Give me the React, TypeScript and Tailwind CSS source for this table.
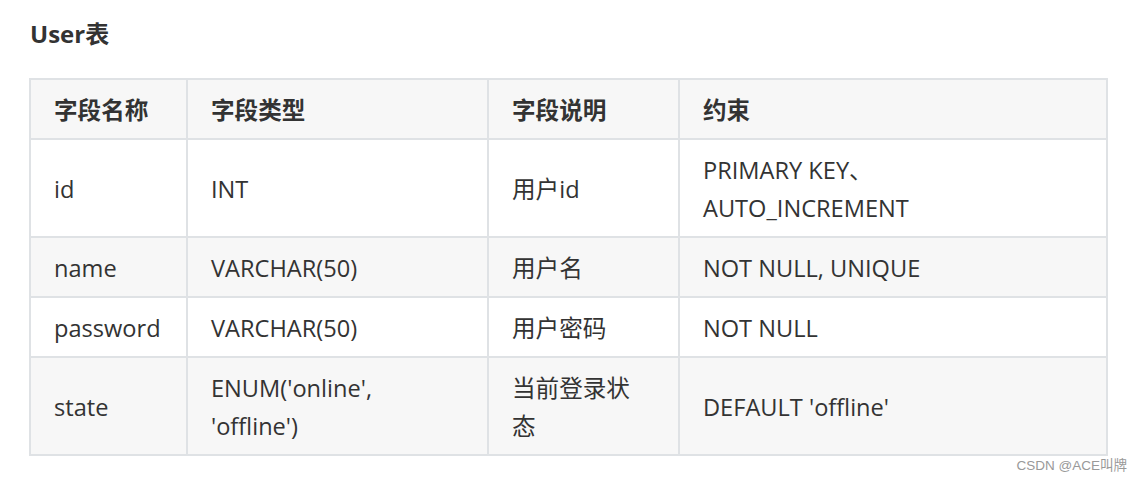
import React from "react";

const font = { fontFamily: '"Open Sans", "Noto Sans CJK SC", sans-serif' };

// Rows of the User table
const rows: string[][] = [
  ["id", "INT", "用户id", "PRIMARY KEY、\nAUTO_INCREMENT"],
  ["name", "VARCHAR(50)", "用户名", "NOT NULL, UNIQUE"],
  ["password", "VARCHAR(50)", "用户密码", "NOT NULL"],
  ["state", "ENUM('online',\n'offline')", "当前登录状\n态", "DEFAULT 'offline'"],
];

const headers = ["字段名称", "字段类型", "字段说明", "约束"];

const Cell: React.FC<{ text: string; head?: boolean }> = ({ text, head }) => (
  <td
    className={`border-2 border-[#dfe2e5] pl-[23px] pr-[20px] pt-[11px] pb-[9px] align-middle whitespace-pre-line leading-[38px] ${
      head ? "font-bold" : ""
    }`}
  >
    {text}
  </td>
);

export default function App() {
  return (
    <div className="w-[1142px] h-[483px] bg-white text-[#333] relative" style={font}>
      <div className="pl-[29px] pt-[17px]">
        <h2 className="pl-[1px] text-[24px] font-bold leading-[34px] text-[#333]">User表</h2>
        <table className="mt-[27px] table-fixed border-collapse w-[1077px] text-[23.6px]">
          <colgroup>
            <col className="w-[157px]" />
            <col className="w-[301px]" />
            <col className="w-[191px]" />
            <col className="w-[428px]" />
          </colgroup>
          <thead>
            <tr className="bg-[#f7f7f7]">
              {headers.map((h) => (
                <Cell key={h} text={h} head />
              ))}
            </tr>
          </thead>
          <tbody>
            {rows.map((r, i) => (
              <tr key={i} className={i % 2 === 1 ? "bg-[#f7f7f7]" : "bg-white"}>
                {r.map((c, j) => (
                  <Cell key={j} text={c} />
                ))}
              </tr>
            ))}
          </tbody>
        </table>
      </div>
      <div
        className="absolute right-[15px] bottom-[7px] text-[13.5px] text-[#999]"
        style={{ fontFamily: '"Liberation Sans", "Noto Sans CJK SC", sans-serif' }}
      >
        CSDN @ACE叫牌
      </div>
    </div>
  );
}
